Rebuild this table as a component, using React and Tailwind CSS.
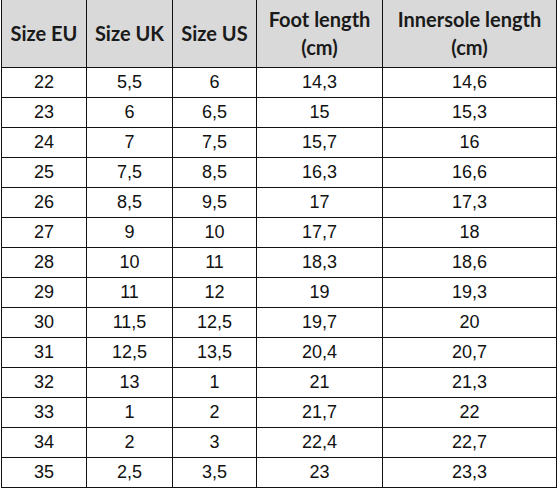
import React from "react";

const rows = [
  ["22", "5,5", "6", "14,3", "14,6"],
  ["23", "6", "6,5", "15", "15,3"],
  ["24", "7", "7,5", "15,7", "16"],
  ["25", "7,5", "8,5", "16,3", "16,6"],
  ["26", "8,5", "9,5", "17", "17,3"],
  ["27", "9", "10", "17,7", "18"],
  ["28", "10", "11", "18,3", "18,6"],
  ["29", "11", "12", "19", "19,3"],
  ["30", "11,5", "12,5", "19,7", "20"],
  ["31", "12,5", "13,5", "20,4", "20,7"],
  ["32", "13", "1", "21", "21,3"],
  ["33", "1", "2", "21,7", "22"],
  ["34", "2", "3", "22,4", "22,7"],
  ["35", "2,5", "3,5", "23", "23,3"],
];

const headers = [
  ["Size EU"],
  ["Size UK"],
  ["Size US"],
  ["Foot length", "(cm)"],
  ["Innersole length", "(cm)"],
];

export default function App() {
  return (
    <div className="w-[558px] h-[490px] bg-white overflow-hidden font-['Liberation_Sans',Arial,sans-serif]">
      <div className="ml-[1px] w-[557px] grid grid-cols-[85px_86px_84px_126px_174px] border-l border-[#111]">
        {headers.map((h, i) => (
          <div
            key={i}
            className="h-[68px] bg-[#d9d9d9] border-r border-b border-[#111] flex flex-col items-center justify-center text-[20px] leading-[28px] font-bold text-[#1a1a1a] pb-[1px] font-[Lato]"
          >
            {h.map((t, j) => (
              <span key={j}>{t}</span>
            ))}
          </div>
        ))}
        {rows.map((r, ri) =>
          r.map((c, ci) => (
            <div
              key={ri + "-" + ci}
              className="h-[30px] border-r border-b border-[#111] flex items-center justify-center text-[18px] text-[#111]"
            >
              {c}
            </div>
          ))
        )}
      </div>
    </div>
  );
}
